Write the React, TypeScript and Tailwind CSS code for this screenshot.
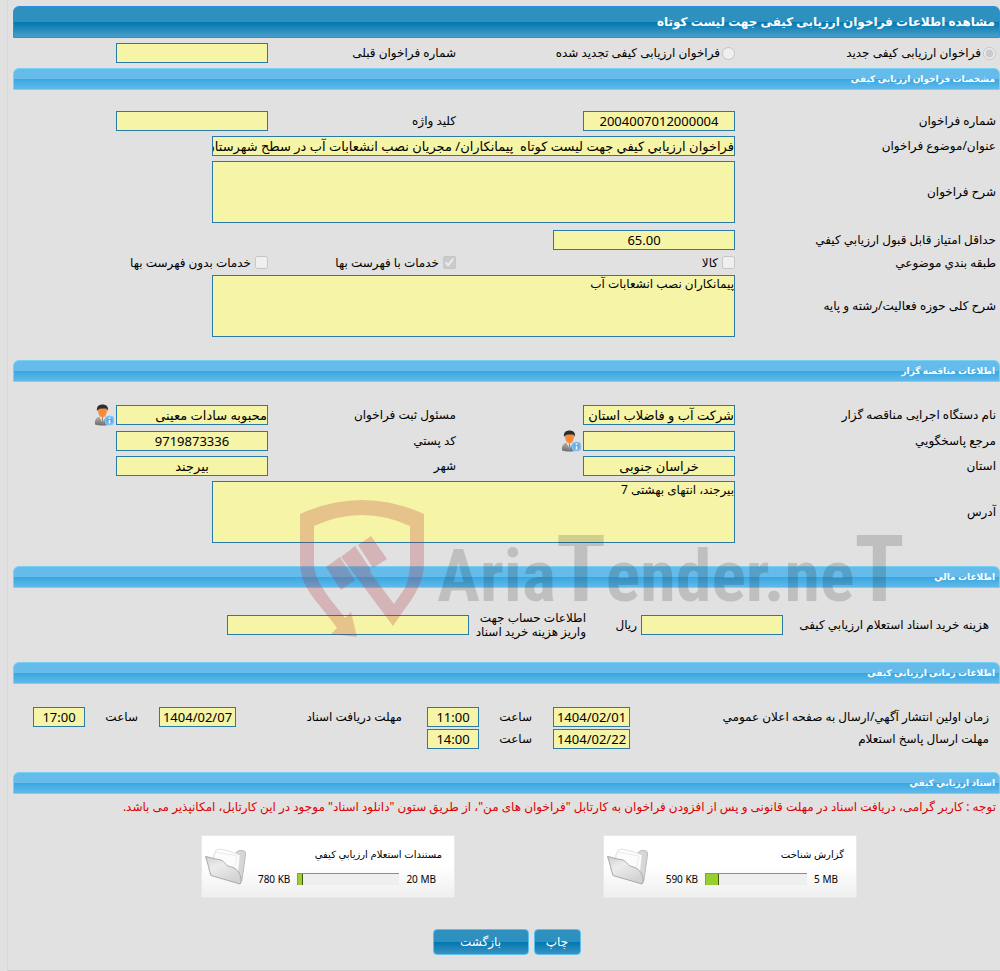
import React from 'react';
import { clsx } from 'clsx';

const FIELD = 'h-5 border border-[#2a7aa8] bg-[#f6f4a6] px-0 text-[13px] leading-4 text-black';
const AREA = 'block h-[62px] w-full max-w-[523px] resize-none border border-[#2a7aa8] bg-[#f6f4a6] text-[12px] leading-4 text-black';
const COLUMNS = 'grid grid-cols-[265fr_279fr_188fr_255fr] items-center';

interface FieldProps {
  id: string;
  value?: string;
  className?: string;
}

const Field: React.FC<FieldProps> = ({ id, value = '', className }) => (
  <input id={id} type="text" readOnly value={value} className={clsx(FIELD, className)} />
);

interface LabelProps {
  htmlFor: string;
  className?: string;
  children: React.ReactNode;
}

const Label: React.FC<LabelProps> = ({ htmlFor, className, children }) => (
  <label htmlFor={htmlFor} className={clsx('text-[12px] leading-[14px]', className)}>
    {children}
  </label>
);

const SectionTitle: React.FC<{ children: React.ReactNode }> = ({ children }) => (
  <h2 className="flex h-[22px] items-center rounded-t-md border border-[#78d0f5] bg-[linear-gradient(#65bbea_0_50%,#37a7e2_50%,#62b9e9_100%)] px-1 text-[9px] font-bold text-white">
    {children}
  </h2>
);

interface ChoiceProps {
  id: string;
  type: 'radio' | 'checkbox';
  label: string;
  checked?: boolean;
}

const Choice: React.FC<ChoiceProps> = ({ id, type, label, checked = false }) => (
  <div className={clsx('flex items-center', type === 'radio' ? 'gap-[2px]' : 'gap-1')}>
    <input
      id={id}
      type={type}
      name={type === 'radio' ? 'callKind' : id}
      disabled
      defaultChecked={checked}
      className="size-[13px]"
    />
    <Label htmlFor={id}>{label}</Label>
  </div>
);

const UserInfoIcon: React.FC = () => (
  <svg width="20" height="22" viewBox="0 0 20 22" aria-hidden="true">
    <defs>
      <linearGradient id="suit" x1="0" y1="0" x2="0" y2="1">
        <stop offset="0" stopColor="#b4b4b4" />
        <stop offset="1" stopColor="#6c6c6c" />
      </linearGradient>
      <radialGradient id="info">
        <stop offset="0" stopColor="#3f9be8" />
        <stop offset="1" stopColor="#7cc1f3" />
      </radialGradient>
    </defs>
    <path d="M1 20.500C.5 16 2 13.500 6 12.500h5c4 .8 5.500 3 5 8-4 1.300-11 1.300-15 0Z" fill="url(#suit)" />
    <path d="m5.500 12 3 8 3-8Z" fill="#f4f4f4" />
    <path d="m8 13-.6 5.500 1.100 1.500 1.100-1.500L9 13Z" fill="#888" />
    <path d="M4 6c0-3 2-4 4.500-4S13 3 13 6c0 4-2 7.500-4.500 7.500S4 10 4 6Z" fill="#f58b3c" />
    <path d="M3 7C2.200 2.500 5 .5 8.500.5S14.800 2.500 14 7c-.6-1.800-1.500-2.400-3-2.400-2 .2-5 0-6 .3-.8.400-1.400 1.100-2 2.100Z" fill="#2d2d2d" />
    <rect x="11" y="12" width="9" height="9" rx="3.500" fill="url(#info)" stroke="#8fcaf5" strokeWidth=".6" />
    <path d="M15.500 13.600v1.400M15.500 16v3.500" stroke="#fff" strokeWidth="1.600" />
  </svg>
);

const FolderIcon: React.FC = () => (
  <svg width="44" height="40" viewBox="0 0 44 40" aria-hidden="true">
    <defs>
      <linearGradient id="folder" x1="0" y1="0" x2=".6" y2="1">
        <stop offset="0" stopColor="#cfcfcf" />
        <stop offset=".4" stopColor="#ececec" />
        <stop offset="1" stopColor="#d2d2d2" />
      </linearGradient>
    </defs>
    <path d="M30 8c3-4 5-5 8-4.500 3 .2 4 1.500 3.500 4.500L38 33l-2 4-8-12Z" fill="#d6d6d6" stroke="#b0b0b0" strokeWidth=".8" />
    <path d="m9 10 3-7 4-1 9 2 11 4-2 20-20-6Z" fill="#fcfcfc" stroke="#dcdcdc" strokeWidth=".8" />
    <path d="m10 11 1-6 22 4-3 14" fill="none" stroke="#e4e4e4" strokeWidth=".7" />
    <path
      d="M1.500 9.500c5 .8 8 2.500 13 3 6 .5 6 5.500 11 7 6 1 12 6 11.500 15L36 37 7 28.500C5 23 4 16 1.500 9.500Z"
      fill="url(#folder)"
      stroke="#a8a8a8"
    />
  </svg>
);

interface DocumentCardProps {
  title: string;
  used: string;
  limit: string;
  percent: number;
  className?: string;
}

const DocumentCard: React.FC<DocumentCardProps> = ({ title, used, limit, percent, className }) => (
  <article
    className={clsx(
      'flex h-[63px] items-center border border-[#e8e8e8] bg-[linear-gradient(#ffffff_50%,#efefef)] pr-3',
      className
    )}
  >
    <div className="flex-1 pb-[2px]">
      <h3 className="text-[10px] leading-[14px]">{title}</h3>
      <div dir="ltr" className="mt-3 flex items-center justify-end gap-[7px] pr-[6px] text-[10px] leading-3">
        <span>{used}</span>
        <div
          role="progressbar"
          aria-valuenow={percent}
          aria-label={title}
          className="h-3 w-[102px] border-t border-l border-[#8f8f8f] bg-[#efefef]"
        >
          <div className="h-full border-r border-[#3f5a10] bg-[#9acd32]" style={{ width: `${percent}%` }} />
        </div>
        <span>{limit}</span>
      </div>
    </div>
    <div className="pl-[2px]">
      <FolderIcon />
    </div>
  </article>
);

const Watermark: React.FC = () => (
  <div dir="ltr" className="pointer-events-none absolute top-[499px] left-[299px]">
    <svg width="640" height="144" viewBox="0 0 640 144" aria-hidden="true">
      <g fill="#b02a35" opacity=".24">
        <path d="M1 15Q63-13 125 15V64Q125 78 118 91C112 103 103 113 94 127L59 80 42 58 56 47 72 71 71 73 95 105 106 89Q111 78 111 64V27Q63 5 15 27V64Q15 76 23 88C30 100 39 109 46 119L52 113 58 138 32 135 38 129C29 116 20 107 11 94Q1 80 1 64Z" />
        <path d="M27 68 41 58 56 81 42 91ZM59 46 72 37 88 60 74 69Z" />
      </g>
      <text
        x="138"
        y="102"
        fill="#000000"
        fillOpacity=".15"
        className="font-['Liberation_Sans_Narrow','Roboto_Condensed',sans-serif] text-[72px] font-bold"
      >
        Aria<tspan className="text-[92px]">T</tspan>ender.ne<tspan className="text-[92px]">T</tspan>
      </text>
    </svg>
  </div>
);

interface ActionButtonProps {
  className?: string;
  children: React.ReactNode;
}

const ActionButton: React.FC<ActionButtonProps> = ({ className, children }) => (
  <button
    type="button"
    className={clsx(
      'h-[26px] rounded-[4px] border border-[#5cc0ee] bg-[linear-gradient(#2e90bf_0_50%,#0077b0_50%,#3b93c0_100%)] text-[12px] text-white',
      className
    )}
  >
    {children}
  </button>
);

const App: React.FC = () => {
  return (
    <div dir="rtl" className="relative bg-[#e1e1e1] pl-[7px] font-['Noto_Sans','DejaVu_Sans',sans-serif] text-black">
      <main className="border-b border-l border-b-[#cccccc] border-l-[#dadada] pt-[6px] pb-[15px] pl-[5px]">
        <h1 className="flex h-8 items-center rounded-t-md border border-[#2a8fdc] bg-[linear-gradient(#2e90bf_0_50%,#0077b0_50%,#4a9fc8_100%)] px-1 text-[12px] font-bold text-white">
          مشاهده اطلاعات فراخوان ارزیابی کیفی جهت لیست کوتاه
        </h1>

        <div className={clsx(COLUMNS, 'py-[5px]')}>
          <div className="pr-1">
            <Choice id="newCall" type="radio" label="فراخوان ارزیابی کیفی جدید" checked />
          </div>
          <Choice id="renewedCall" type="radio" label="فراخوان ارزیابی کیفی تجدید شده" />
          <Label htmlFor="previousNumber">شماره فراخوان قبلی</Label>
          <Field id="previousNumber" className="w-[152px]" />
        </div>

        <SectionTitle>مشخصات فراخوان ارزیابی کیفی</SectionTitle>
        <section className="flex flex-col gap-[5px] pt-[21px] pb-[23px]">
          <div className={COLUMNS}>
            <Label htmlFor="callNumber" className="pr-1">شماره فراخوان</Label>
            <Field id="callNumber" value="2004007012000004" className="w-[152px] text-center" />
            <Label htmlFor="keyword">کلید واژه</Label>
            <Field id="keyword" className="w-[152px]" />
          </div>
          <div className={COLUMNS}>
            <Label htmlFor="subject" className="pr-1">عنوان/موضوع فراخوان</Label>
            <Field
              id="subject"
              value="فراخوان ارزيابي کيفي جهت لیست کوتاه  پیمانکاران/ مجریان نصب انشعابات آب در سطح شهرستان بیرجند"
              className="col-span-3 w-full max-w-[523px]"
            />
          </div>
          <div className={COLUMNS}>
            <Label htmlFor="description" className="pr-1">شرح فراخوان</Label>
            <div className="col-span-3">
              <textarea id="description" readOnly className={AREA} />
            </div>
          </div>
          <div className={clsx(COLUMNS, 'pt-[2px]')}>
            <Label htmlFor="minScore" className="pr-1">حداقل امتياز قابل قبول ارزيابي کيفي</Label>
            <Field id="minScore" value="65.00" className="w-[182px] text-center" />
          </div>
          <div className={clsx(COLUMNS, 'h-[15px]')}>
            <span className="pr-1 text-[12px] leading-[14px]">طبقه بندي موضوعي</span>
            <Choice id="goods" type="checkbox" label="کالا" />
            <Choice id="pricedServices" type="checkbox" label="خدمات با فهرست بها" checked />
            <Choice id="unpricedServices" type="checkbox" label="خدمات بدون فهرست بها" />
          </div>
          <div className={COLUMNS}>
            <Label htmlFor="activity" className="pr-1">شرح کلی حوزه فعالیت/رشته و پایه</Label>
            <div className="col-span-3">
              <textarea id="activity" readOnly value="پیمانکاران نصب انشعابات آب" className={AREA} />
            </div>
          </div>
        </section>

        <SectionTitle>اطلاعات مناقصه گزار</SectionTitle>
        <section className="flex flex-col gap-[5px] pt-[22px] pb-[23px]">
          <div className={COLUMNS}>
            <Label htmlFor="agency" className="pr-1">نام دستگاه اجرایی مناقصه گزار</Label>
            <Field id="agency" value="شرکت آب و فاضلاب استان خراسان جنوبی" className="w-[152px]" />
            <Label htmlFor="registrar">مسئول ثبت فراخوان</Label>
            <div className="flex h-[21px] items-center gap-[2px]">
              <Field id="registrar" value="محبوبه سادات معینی" className="w-[152px]" />
              <UserInfoIcon />
            </div>
          </div>
          <div className={COLUMNS}>
            <Label htmlFor="contact" className="pr-1">مرجع پاسخگويي</Label>
            <div className="flex h-[21px] items-center gap-[2px]">
              <Field id="contact" className="w-[152px]" />
              <UserInfoIcon />
            </div>
            <Label htmlFor="postalCode">کد پستي</Label>
            <Field id="postalCode" value="9719873336" className="w-[152px] text-center" />
          </div>
          <div className={COLUMNS}>
            <Label htmlFor="province" className="pr-1">استان</Label>
            <Field id="province" value="خراسان جنوبی" className="w-[152px] text-center" />
            <Label htmlFor="city">شهر</Label>
            <Field id="city" value="بیرجند" className="w-[152px] text-center" />
          </div>
          <div className={COLUMNS}>
            <Label htmlFor="address" className="pr-1">آدرس</Label>
            <div className="col-span-3">
              <textarea id="address" readOnly value="بیرجند، انتهای بهشتی 7" className={AREA} />
            </div>
          </div>
        </section>

        <SectionTitle>اطلاعات مالي</SectionTitle>
        <section className="grid h-[74px] grid-cols-[217fr_146fr_51fr_117fr_456fr] items-center">
          <Label htmlFor="documentCost" className="pr-[11px]">هزينه خريد اسناد استعلام ارزيابي کیفی</Label>
          <Field id="documentCost" className="w-[142px]" />
          <span className="text-[12px] leading-[14px]">ریال</span>
          <Label htmlFor="account">
            اطلاعات حساب جهت
            <br />
            واریز هزینه خرید اسناد
          </Label>
          <Field id="account" className="w-[242px]" />
        </section>

        <SectionTitle>اطلاعات زمانی ارزیابی کیفی</SectionTitle>
        <section className="grid grid-cols-[370fr_98fr_53fr_77fr_166fr_98fr_53fr_72fr] items-center gap-y-[2px] py-[23px]">
          <Label htmlFor="publishDate" className="pr-[11px]">زمان اولین انتشار آگهي/ارسال به صفحه اعلان عمومي</Label>
          <Field id="publishDate" value="1404/02/01" className="w-[77px] text-center" />
          <Label htmlFor="publishTime">ساعت</Label>
          <Field id="publishTime" value="11:00" className="w-[52px] text-center" />
          <Label htmlFor="receiveDate">مهلت دریافت اسناد</Label>
          <Field id="receiveDate" value="1404/02/07" className="w-[77px] text-center" />
          <Label htmlFor="receiveTime">ساعت</Label>
          <Field id="receiveTime" value="17:00" className="w-[52px] text-center" />
          <Label htmlFor="replyDate" className="pr-[11px]">مهلت ارسال پاسخ استعلام</Label>
          <Field id="replyDate" value="1404/02/22" className="w-[77px] text-center" />
          <Label htmlFor="replyTime">ساعت</Label>
          <Field id="replyTime" value="14:00" className="w-[52px] text-center" />
        </section>

        <SectionTitle>اسناد ارزيابي کيفي</SectionTitle>
        <section>
          <p className="pt-[5px] pr-1 text-[12px] leading-4 text-[#dd0000]">
            توجه : کاربر گرامی، دریافت اسناد در مهلت قانونی و پس از افزودن فراخوان به کارتابل "فراخوان های من"، از طریق ستون "دانلود اسناد" موجود در این کارتابل، امکانپذیر می باشد.
          </p>
          <div className="grid grid-cols-[143fr_254px_148fr_254px_188fr] pt-5">
            <DocumentCard title="گزارش شناخت" used="590 KB" limit="5 MB" percent={13} className="col-start-2" />
            <DocumentCard title="مستندات استعلام ارزيابي کيفي" used="780 KB" limit="20 MB" percent={5} className="col-start-4" />
          </div>
        </section>

        <div className="flex justify-center gap-[5px] pt-[31px]">
          <ActionButton className="w-[47px]">چاپ</ActionButton>
          <ActionButton className="w-24">بازگشت</ActionButton>
        </div>
      </main>
      <Watermark />
    </div>
  );
};

export default App;
